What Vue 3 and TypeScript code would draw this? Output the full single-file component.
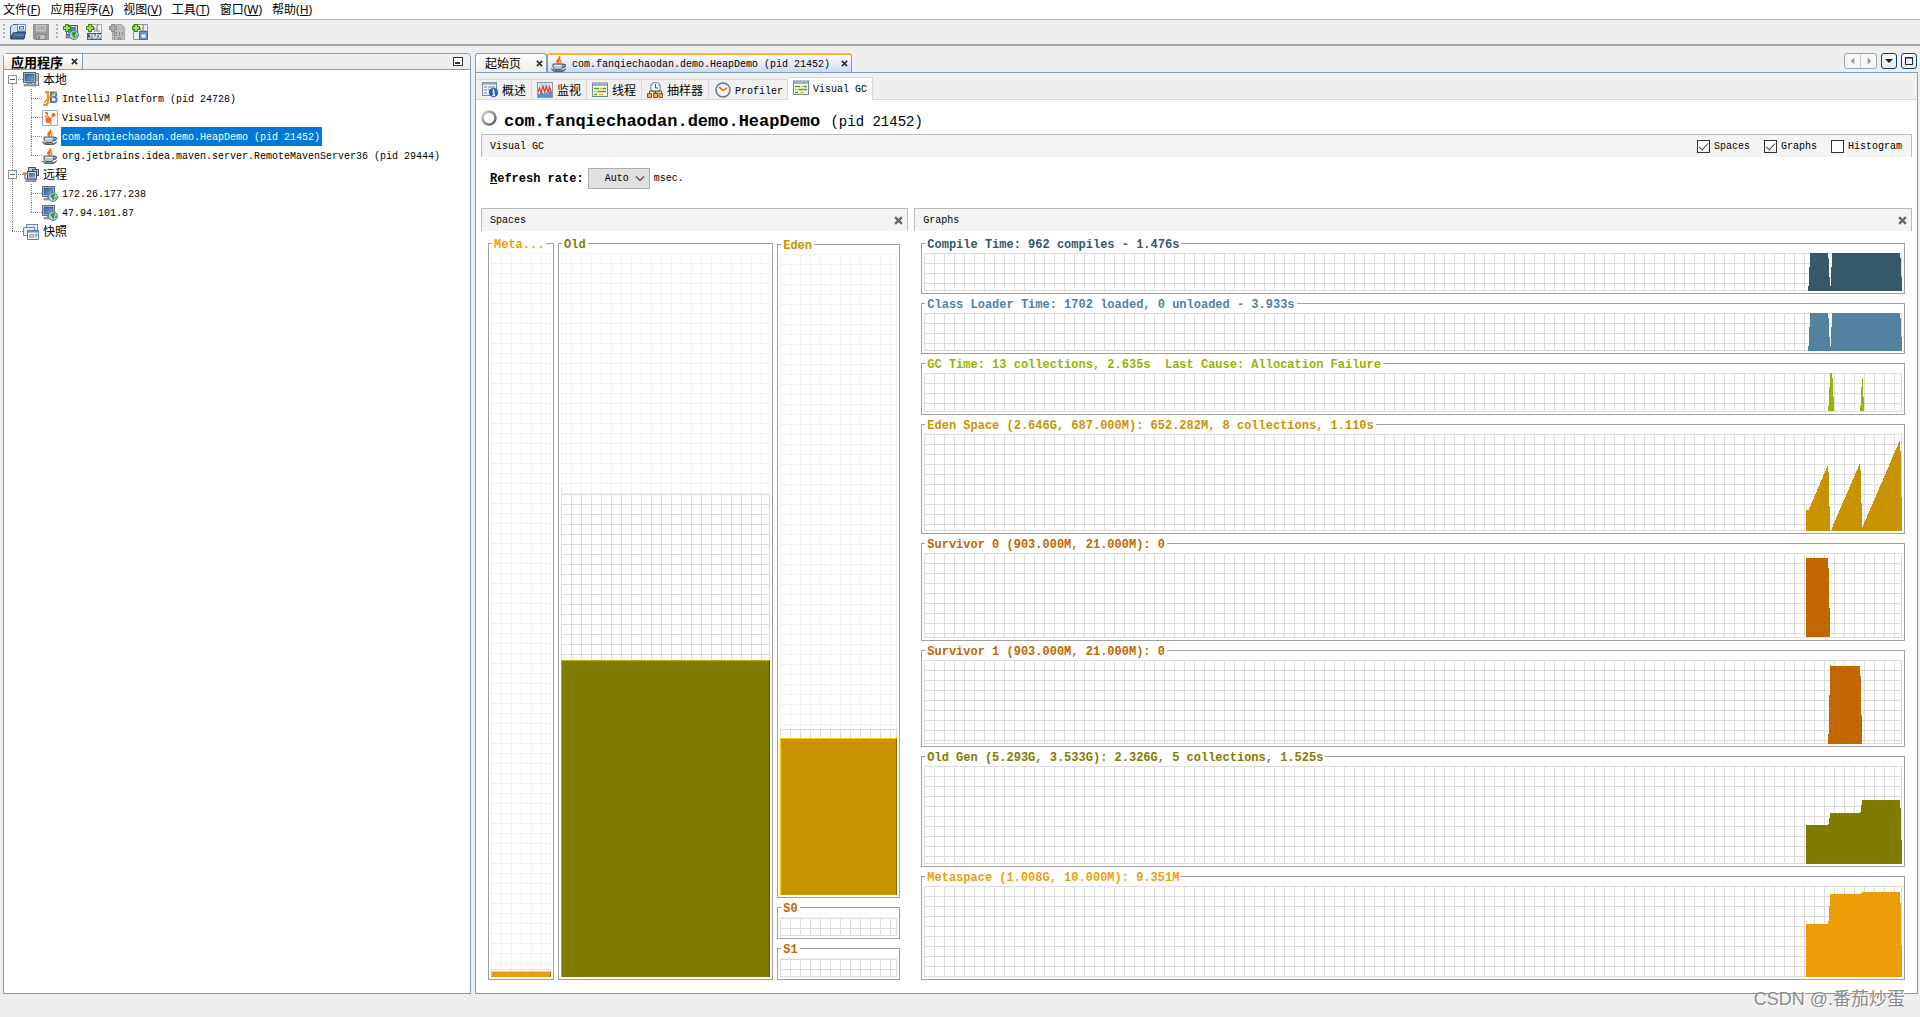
<script setup lang="ts">
import { ref } from 'vue'

interface TreeRow {
  label: string
  icon: string
  guides: string[]
  expander?: boolean
  selected?: boolean
}

interface Space {
  name: string
  color: string
  light: string
  dark: string
  used: number
  committed: number
}

interface Graph {
  title: string
  color: string
  weight: number
  height: number
  points: string
}

const menus = [
  { text: '文件', key: 'F' },
  { text: '应用程序', key: 'A' },
  { text: '视图', key: 'V' },
  { text: '工具', key: 'T' },
  { text: '窗口', key: 'W' },
  { text: '帮助', key: 'H' },
]

const toolGroups = [
  [
    { icon: 'open', label: 'Open' },
    { icon: 'save', label: 'Save' },
  ],
  [
    { icon: 'add-host', label: 'Add remote host' },
    { icon: 'add-jmx', label: 'Add JMX connection' },
    { icon: 'add-dump', label: 'Add core dump' },
    { icon: 'add-snap', label: 'Add snapshot' },
  ],
]

// Guide codes: d = down, u = up, r = right
const tree: TreeRow[] = [
  { label: '本地', icon: 'local', guides: ['dr'], expander: true },
  { label: 'IntelliJ Platform (pid 24728)', icon: 'jb', guides: ['ud', 'udr'] },
  { label: 'VisualVM', icon: 'vvm', guides: ['ud', 'udr'] },
  { label: 'com.fanqiechaodan.demo.HeapDemo (pid 21452)', icon: 'java', guides: ['ud', 'udr'], selected: true },
  { label: 'org.jetbrains.idea.maven.server.RemoteMavenServer36 (pid 29444)', icon: 'java', guides: ['ud', 'ur'] },
  { label: '远程', icon: 'remote', guides: ['udr'], expander: true },
  { label: '172.26.177.238', icon: 'host', guides: ['ud', 'udr'] },
  { label: '47.94.101.87', icon: 'host', guides: ['ud', 'ur'] },
  { label: '快照', icon: 'snaps', guides: ['ur'] },
]

const views = [
  { label: '概述', icon: 'overview' },
  { label: '监视', icon: 'monitor' },
  { label: '线程', icon: 'threads' },
  { label: '抽样器', icon: 'sampler' },
  { label: 'Profiler', icon: 'profiler' },
  { label: 'Visual GC', icon: 'threads' },
]
const activeView = ref('Visual GC')

const toggles = ref([
  { label: 'Spaces', on: true },
  { label: 'Graphs', on: true },
  { label: 'Histogram', on: false },
])
const rate = ref('Auto')

const meta: Space = { name: 'Meta...', color: '#ec9e0a', light: '#ffdc00', dark: '#a56e07', used: 0.8, committed: 1.1 }
const old: Space = { name: 'Old', color: '#807c00', light: '#b4b000', dark: '#595600', used: 43.9, committed: 66.8 }
const eden: Space = { name: 'Eden', color: '#c89200', light: '#ffcc00', dark: '#8c6600', used: 24.5, committed: 26 }
const s0: Space = { name: 'S0', color: '#c26600', light: '#ff9000', dark: '#884700', used: 0, committed: 100 }
const s1: Space = { ...s0, name: 'S1' }
const columns = [
  { weight: 66, spaces: [{ ...meta, grow: 1 }] },
  { weight: 215, spaces: [{ ...old, grow: 1 }] },
  { weight: 123, spaces: [{ ...eden, grow: 641 }, { ...s0, grow: 19 }, { ...s1, grow: 19 }] },
]

// Turns [column, top] samples into a stepped outline that ends at the baseline
function steps(height: number, samples: number[][]): string {
  let path = `${samples[0][0]},${height}`
  samples.forEach(([x, y], i) => {
    path += ` ${x},${y}`
    if (i + 1 < samples.length) path += ` ${samples[i + 1][0]},${y}`
  })
  return `${path} ${samples[samples.length - 1][0]},${height}`
}

function ramp(x0: number, y0: number, x1: number, y1: number): number[][] {
  const out: number[][] = []
  for (let x = x0; x < x1; x++) out.push([x, Math.round(y0 + ((y1 - y0) * (x - x0)) / (x1 - 1 - x0))])
  return out
}

const busy = [[4, 33], [5, 14], [6, 0], [24, 5], [25, 24], [26, 33], [27, 14], [28, 0], [96, 5], [97, 24], [98, 38]]
const graphs: Graph[] = [
  { title: 'Compile Time: 962 compiles - 1.476s', color: '#35586a', weight: 38, height: 38, points: steps(38, busy) },
  { title: 'Class Loader Time: 1702 loaded, 0 unloaded - 3.933s', color: '#5282a0', weight: 38, height: 38, points: steps(38, busy) },
  {
    title: 'GC Time: 13 collections, 2.635s  Last Cause: Allocation Failure', color: '#96b400', weight: 38, height: 38,
    points: steps(38, [[24, 33], [25, 14], [26, 0], [28, 5], [29, 24], [30, 38], [56, 33], [57, 14], [58, 5], [59, 24], [60, 38]]),
  },
  {
    title: 'Eden Space (2.646G, 687.000M): 652.282M, 8 collections, 1.110s', color: '#c89200', weight: 97, height: 97,
    points: steps(97, [[2, 76], ...ramp(5, 74, 24, 32), [24, 38], [25, 72], [26, 97], ...ramp(27, 95, 56, 30), [56, 36], [57, 69], ...ramp(58, 93, 96, 7), [96, 17], [97, 63], [98, 97]]),
  },
  { title: 'Survivor 0 (903.000M, 21.000M): 0', color: '#c26600', weight: 84, height: 84, points: steps(84, [[2, 5], [24, 15], [25, 55], [26, 84]]) },
  { title: 'Survivor 1 (903.000M, 21.000M): 0', color: '#c26600', weight: 84, height: 84, points: steps(84, [[24, 74], [25, 35], [26, 5], [27, 6], [56, 16], [57, 55], [58, 84]]) },
  {
    title: 'Old Gen (5.293G, 3.533G): 2.326G, 5 collections, 1.525s', color: '#807c00', weight: 97, height: 97,
    points: steps(97, [[2, 59], [24, 58], [25, 52], [26, 47], [56, 46], [57, 39], [58, 34], [96, 42], [97, 74], [98, 97]]),
  },
  {
    title: 'Metaspace (1.008G, 10.000M): 9.351M', color: '#ec9e0a', weight: 91, height: 91,
    points: steps(91, [[2, 38], [24, 35], [25, 20], [26, 8], [57, 7], [58, 6], [96, 17], [97, 59], [98, 91]]),
  },
]
</script>

<template>
  <div class="app">
    <svg class="defs" aria-hidden="true">
      <defs>
        <linearGradient id="gScreen" x1="0" y1="0" x2="1" y2="1">
          <stop offset="0" stop-color="#2f5f92" /><stop offset="1" stop-color="#7fa9d6" />
        </linearGradient>
        <linearGradient id="gSpin" x1="0" y1="0" x2="1" y2="1">
          <stop offset="0" stop-color="#d0d2d4" /><stop offset="0.5" stop-color="#8d9196" /><stop offset="1" stop-color="#54585c" />
        </linearGradient>
        <symbol id="plus" viewBox="0 0 16 16">
          <path d="M2.500.5h3v2h2v3h-2v2h-3v-2h-2v-3h2z" fill="#a4e04a" stroke="#2d7d10" />
        </symbol>
        <symbol id="open" viewBox="0 0 16 16">
          <path d="M.5 14.500V3L3 .5h5v8H3z" fill="#d5deea" stroke="#4b6585" />
          <rect x="7.500" y=".5" width="8" height="6.500" fill="#fff" stroke="#6b8cc0" />
          <rect x="9.500" y="2.500" width="4" height="2.500" fill="#dce8f8" stroke="#4a78bd" />
          <path d="M.8 15l2-5 3-.2L7.500 8h8L14 15z" fill="#40658e" stroke="#1e3c60" />
          <path d="M3.500 11h10" stroke="#7d9fc4" />
        </symbol>
        <symbol id="save" viewBox="0 0 16 16">
          <path d="M.5.5h15v15h-14l-1-1z" fill="#9a9a9a" stroke="#939393" />
          <rect x="3" y="1" width="10" height="6.500" fill="#c4c4c4" />
          <path d="M4 3h8M4 5h8" stroke="#989898" />
          <rect x="3.500" y="10.500" width="9" height="5" fill="#bdbdbd" stroke="#858585" />
          <rect x="5" y="12" width="2" height="3" fill="#808080" />
        </symbol>
        <symbol id="globe" viewBox="0 0 16 16">
          <circle cx="11" cy="11" r="4.500" fill="#b4d4ee" stroke="#4f7ba6" />
          <path d="M9 8.500l3-1 1.500 1.500-1.500 2 .5 2-1.500 1.500-1-2.500-1.500-1z" fill="#39a01e" />
          <path d="M13 11.500l1.500-1v2l-1 1z" fill="#39a01e" />
        </symbol>
        <symbol id="host" viewBox="0 0 16 16">
          <rect x=".5" y=".5" width="12" height="10" fill="#d3d7dc" stroke="#5f6d7e" />
          <rect x="2" y="2" width="9" height="7" fill="url(#gScreen)" stroke="#274d78" stroke-width=".6" />
          <path d="M5 11h3v1.500h2V14H2v-1.500h3z" fill="#9aa2ab" stroke="#636c77" stroke-width=".5" />
          <use href="#globe" />
        </symbol>
        <symbol id="add-host" viewBox="0 0 16 16">
          <rect x="3.500" y="1.500" width="11" height="9" fill="#d3d7dc" stroke="#4f5c6b" />
          <rect x="5" y="3" width="8" height="6" fill="url(#gScreen)" />
          <path d="M4 11h6v3H3v-2z" fill="#8d959f" stroke="#535d68" stroke-width=".6" />
          <use href="#globe" />
          <use href="#plus" />
        </symbol>
        <symbol id="cup-mini" viewBox="0 0 16 16">
          <path d="M12 1c-3 2 1 3-1.500 5.500" fill="none" stroke="#e87722" stroke-width="1.400" />
          <path d="M8 7h6M9 4l-1 2" stroke="#6d8aa8" stroke-width="1.200" />
        </symbol>
        <symbol id="add-jmx" viewBox="0 0 16 16">
          <rect x="3.500" y=".5" width="12" height="14" fill="#eef2f7" stroke="#9fb0c4" />
          <use href="#cup-mini" />
          <rect x="1" y="9" width="15" height="7" fill="#5a5a5a" />
          <text x="2" y="15" font-size="7" font-weight="700" fill="#fff" font-family="Liberation Sans, sans-serif">JMX</text>
          <use href="#plus" />
        </symbol>
        <symbol id="add-dump" viewBox="0 0 16 16">
          <path d="M3.500.5h9l3 3v12h-12z" fill="#bcbcbc" stroke="#a6a6a6" />
          <path d="M5 8.500h2.500v3H5zM10.500 8v4M5.500 13v2.500M9 13.500h2.500v2H9zM13.500 8v3" fill="none" stroke="#8d8d8d" />
          <path d="M2.500.5h3v2h2v3h-2v2h-3v-2h-2v-3h2z" fill="#aaa" stroke="#8a8a8a" />
        </symbol>
        <symbol id="add-snap" viewBox="0 0 16 16">
          <path d="M1.500.5h14v15h-14z" fill="#e8eef8" stroke="#8097b8" />
          <use href="#cup-mini" />
          <rect x="7.500" y="7.500" width="8" height="8" fill="#6b92cb" stroke="#4469a6" />
          <rect x="9.500" y="10.500" width="4" height="3" fill="#fff" />
          <use href="#plus" />
        </symbol>
        <symbol id="local" viewBox="0 0 16 16">
          <path d="M11.500 1.500h4v12h-4z" fill="#d9d9d6" stroke="#73777b" />
          <path d="M12 4h3M12 6h3M12 8h3" stroke="#8a8e92" />
          <rect x=".5" y=".5" width="12" height="10" fill="#cfd3d8" stroke="#596675" />
          <rect x="2" y="2" width="9" height="7" fill="url(#gScreen)" stroke="#264b76" stroke-width=".6" />
          <path d="M4 11h5v1.500h4V14H1v-1.500h3z" fill="#a6acb3" stroke="#697079" stroke-width=".6" />
        </symbol>
        <symbol id="remote" viewBox="0 0 16 16">
          <rect x="5.500" y=".5" width="7" height="6" fill="#b9c3cf" stroke="#46525f" />
          <rect x="9.500" y="2.500" width="6" height="6" fill="#b9c3cf" stroke="#46525f" />
          <rect x="4.500" y="4.500" width="9" height="7.500" fill="#d7dbdf" stroke="#38434f" />
          <rect x="6" y="6" width="6" height="4.500" fill="url(#gScreen)" />
          <path d="M5 12.500h8v2H3v-1z" fill="#a1a7ae" stroke="#4e5761" stroke-width=".6" />
          <path d="M2 6.500h3M2 6v6h3" stroke="#57626e" fill="none" />
          <circle cx="1.500" cy="6.500" r="1.300" fill="#f0a830" stroke="#8b5a10" stroke-width=".6" />
        </symbol>
        <symbol id="snaps" viewBox="0 0 16 16">
          <path d="M3.500.5h11v8h-11z" fill="#e2e9f4" stroke="#6c86b5" />
          <path d="M.5 3.500h11v8H.5z" fill="#e9eef6" stroke="#6c86b5" />
          <path d="M4.500 6.500h11v9h-11z" fill="#f4f7fb" stroke="#5876a8" />
          <path d="M5 7.500h10" stroke="#6c8fd0" stroke-width="2" />
          <path d="M6.500 10.500h4v3h-4zM12 10h2v2h-2zM11.500 13.500h2" fill="#c8ccd2" stroke="#888f9a" stroke-width=".7" />
        </symbol>
        <symbol id="jb" viewBox="0 0 16 16">
          <path d="M9 1.500h3.500c2.500 0 2.500 4-.5 4.500 3.500 0 3.500 5 0 5H9z" fill="none" stroke="#4876c8" stroke-width="2" />
          <path d="M9 6h3.500" stroke="#4876c8" stroke-width="1.600" />
          <path d="M3 1h3v9.500c0 3-2 4-4.500 3.500" fill="none" stroke="#f2920c" stroke-width="2.400" />
          <path d="M14.500.5L2 11.500" stroke="#f2920c" stroke-width="1.500" />
        </symbol>
        <symbol id="vvm" viewBox="0 0 16 16">
          <rect x=".5" y=".5" width="15" height="15" fill="#f7f9fb" stroke="#9bb2c8" />
          <path d="M7 10L5 2.500M7 10l5-5" stroke="#f26a21" />
          <circle cx="6.500" cy="10" r="3" fill="#f26a21" /><circle cx="11.500" cy="5" r="2" fill="#f26a21" />
          <circle cx="4.500" cy="3" r="1.300" fill="#f26a21" /><circle cx="4" cy="6.500" r="1" fill="#f26a21" />
          <circle cx="9" cy="13.500" r="1" fill="#f26a21" />
        </symbol>
        <symbol id="java" viewBox="0 0 16 16">
          <path d="M8.500 0C9 2.500 4 4 6 6.500 7 8 8 8 8 8 6 5.500 10.500 4.500 8.500 0z" fill="#e8660c" stroke="#e8660c" stroke-width=".8" />
          <path d="M10.500 3.500c-2.500 1.500-1 3-1.500 4.500 2-1.500.5-2.500 1.500-4.500z" fill="#f08a30" stroke="#f08a30" stroke-width=".5" />
          <path d="M2 8h10v2c0 2-1.500 3.500-3 3.500H5c-2 0-3-1.500-3-3.500z" fill="#bac6cf" stroke="#4a5a67" />
          <path d="M12 8.500c3.500-.8 3 3-.8 3.200" fill="none" stroke="#4a5a67" stroke-width="1.300" />
          <path d="M3.500 9.500h6.500" stroke="#eef3f6" />
          <path d="M.5 12.800c2 2.800 12 2.800 14 0-1 2-2 2.700-4 2.700h-6c-2 0-3-.7-4-2.700z" fill="#a9b5be" stroke="#4a5a67" />
        </symbol>
        <symbol id="overview" viewBox="0 0 16 16">
          <rect x=".5" y=".5" width="14" height="13" fill="#eaf0f7" stroke="#7d8fa3" />
          <path d="M1 1.500h13" stroke="#8ea7c3" stroke-width="2" />
          <path d="M2 5h3M6 5h7M2 8h3M6 8h3M2 11h3" stroke="#6f86a3" />
          <circle cx="11.500" cy="10.500" r="4.300" fill="#2b5eb0" stroke="#1c4384" stroke-width=".6" />
          <path d="M11.500 7.300v1.600M10.500 10h1.500v3.300M10.300 13.300h2.900" stroke="#fff" stroke-width="1.300" fill="none" />
        </symbol>
        <symbol id="monitor" viewBox="0 0 16 16">
          <rect x=".5" y=".5" width="15" height="15" fill="#e6ebf1" stroke="#8b98a8" />
          <path d="M4 1v9M8 1v9M12 1v9" stroke="#b6c2d0" />
          <path d="M1 15v-4l2 1 2-2 2 2 2-2 2 2 2-3 2 2v4z" fill="#5c8fd0" />
          <path d="M1 10l1.500-4 1.500 5 2-7 1.500 6 2-6 1.500 7 1.500-6 2 6" fill="none" stroke="#d83838" stroke-width="1.100" />
        </symbol>
        <symbol id="threads" viewBox="0 0 16 16">
          <rect x=".5" y="1" width="15" height="13.500" fill="#fbfcfd" stroke="#75879b" />
          <path d="M1 2.500h14" stroke="#9db1c8" stroke-width="3" />
          <path d="M2 6.500h5M11 6.500h3M6 9.500h8M2 12.500h3" stroke="#35a811" stroke-width="1.400" />
          <path d="M8 6.500h3M2 9.500h4M7 12.500h4" stroke="#f0b400" stroke-width="1.400" />
        </symbol>
        <symbol id="sampler" viewBox="0 0 16 16">
          <circle cx="8.500" cy="5.500" r="5" fill="#f2f5f8" stroke="#8094ab" stroke-width="1.200" />
          <path d="M8.500 2v4h2.500" stroke="#3a5679" fill="none" />
          <path d="M2.500 12V9h12v3M8.500 9v3" stroke="#735018" fill="none" />
          <path d="M.5 11.500h4v4h-4zM6.500 11.500h4v4h-4zM12 11.500h3.500v4H12z" fill="#f4b73a" stroke="#835508" />
        </symbol>
        <symbol id="profiler" viewBox="0 0 16 16">
          <circle cx="8" cy="8" r="7" fill="#f4f8fb" stroke="#66788d" stroke-width="1.500" />
          <circle cx="8" cy="8" r="5.300" fill="none" stroke="#afc3d8" stroke-dasharray="1 2" />
          <path d="M8 8.500L4 5M8 8.500L12 6" stroke="#e77718" stroke-width="1.700" />
        </symbol>
        <symbol id="cross" viewBox="0 0 8 8">
          <path d="M1 1l6 6M7 1L1 7" stroke="currentColor" stroke-width="2" fill="none" />
        </symbol>
      </defs>
    </svg>

    <nav class="menubar">
      <button v-for="m in menus" :key="m.key" type="button">{{ m.text }}(<u>{{ m.key }}</u>)</button>
    </nav>

    <div class="toolbar" role="toolbar">
      <div v-for="(group, i) in toolGroups" :key="i" class="tool-group">
        <span class="grip"></span>
        <button v-for="t in group" :key="t.icon" type="button" :aria-label="t.label">
          <svg class="icon"><use :href="'#' + t.icon" /></svg>
        </button>
      </div>
    </div>

    <div class="workspace">
      <aside class="explorer">
        <header class="explorer-head">
          <div class="explorer-tab">
            <span>应用程序</span>
            <button type="button" aria-label="Close"><svg class="x"><use href="#cross" /></svg></button>
          </div>
          <button type="button" class="minimize" aria-label="Minimize"></button>
        </header>
        <ul class="tree">
          <li v-for="row in tree" :key="row.label">
            <svg v-for="(g, i) in row.guides" :key="i" class="guide" viewBox="0 0 19 19">
              <path v-if="g.includes('u')" d="M8.500 0v10" />
              <path v-if="g.includes('d')" d="M8.500 10v9" />
              <path v-if="g.includes('r')" d="M8 9.500h11" />
              <g v-if="row.expander" class="expander">
                <rect x="4.500" y="5.500" width="8" height="8" rx="1" />
                <path d="M6 9.500h5" />
              </g>
            </svg>
            <svg class="icon"><use :href="'#' + row.icon" /></svg>
            <span class="node" :class="{ selected: row.selected, root: row.guides.length === 1 }">{{ row.label }}</span>
          </li>
        </ul>
      </aside>

      <main class="editor">
        <header class="doc-tabs">
          <div class="doc-tab">
            <span class="cjk">起始页</span>
            <button type="button" aria-label="Close"><svg class="x"><use href="#cross" /></svg></button>
          </div>
          <div class="doc-tab current">
            <svg class="icon"><use href="#java" /></svg>
            <span class="low">com.fanqiechaodan.demo.HeapDemo (pid 21452)</span>
            <button type="button" aria-label="Close"><svg class="x"><use href="#cross" /></svg></button>
          </div>
          <div class="doc-controls">
            <span class="pair">
              <button type="button" aria-label="Scroll left"><svg viewBox="0 0 16 16"><path d="M10 4v8L6 8z" fill="#999" /></svg></button>
              <button type="button" aria-label="Scroll right"><svg viewBox="0 0 16 16"><path d="M7 4v8l4-4z" fill="#999" /></svg></button>
            </span>
            <button type="button" class="ctl" aria-label="Show list"><svg viewBox="0 0 14 14"><path d="M3 5h8L7 9z" fill="#222" /></svg></button>
            <button type="button" class="ctl" aria-label="Maximize"><svg viewBox="0 0 14 14"><path d="M3.500 3.500h7v7h-7z" fill="none" stroke="#222" /><path d="M3 4h8" stroke="#222" /></svg></button>
          </div>
        </header>

        <div class="view-tabs" role="tablist">
          <button
            v-for="v in views" :key="v.label" type="button" role="tab"
            :class="{ active: v.label === activeView }" :aria-selected="v.label === activeView"
            @click="activeView = v.label"
          >
            <svg class="icon"><use :href="'#' + v.icon" /></svg><span>{{ v.label }}</span>
          </button>
        </div>

        <div class="page">
          <h1>
            <svg class="icon" viewBox="0 0 16 16"><circle cx="8" cy="8" r="6.500" fill="none" stroke="url(#gSpin)" stroke-width="2.500" /></svg>
            <span>com.fanqiechaodan.demo.HeapDemo <small>(pid 21452)</small></span>
          </h1>

          <div class="bar">
            <h2>Visual GC</h2>
            <div class="toggles">
              <label v-for="t in toggles" :key="t.label"><input v-model="t.on" type="checkbox" /><span class="low">{{ t.label }}</span></label>
            </div>
          </div>

          <div class="refresh">
            <label for="rate"><u>R</u>efresh rate:</label>
            <span class="combo">
              <select id="rate" v-model="rate">
                <option>Auto</option>
              </select>
              <svg viewBox="0 0 10 6"><path d="M1 .5l4 4 4-4" fill="none" stroke="#444" stroke-width="1.200" /></svg>
            </span>
            <span class="low">msec.</span>
          </div>

          <div class="panels">
            <section class="spaces">
              <div class="bar">
                <h2>Spaces</h2>
                <button type="button" aria-label="Close Spaces"><svg class="x big"><use href="#cross" /></svg></button>
              </div>
              <div class="space-row">
                <div v-for="(c, i) in columns" :key="i" class="space-col" :class="{ multi: c.spaces.length > 1 }" :style="{ flexGrow: c.weight }">
                  <div v-for="s in c.spaces" :key="s.name" class="box" :style="{ flexGrow: s.grow }">
                    <h3 :style="{ color: s.color }">{{ s.name }}</h3>
                    <div class="grid faint">
                      <div class="grid committed" :style="{ height: s.committed + '%' }"></div>
                      <div
                        v-if="s.used" class="used"
                        :style="{ height: s.used + '%', background: s.color, borderColor: `${s.light} ${s.dark} ${s.color} ${s.light}` }"
                      ></div>
                    </div>
                  </div>
                </div>
              </div>
            </section>

            <section class="graphs">
              <div class="bar">
                <h2>Graphs</h2>
                <button type="button" aria-label="Close Graphs"><svg class="x big"><use href="#cross" /></svg></button>
              </div>
              <div class="graph-col">
                <div v-for="g in graphs" :key="g.title" class="box" :style="{ flexGrow: g.weight }">
                  <h3 :style="{ color: g.color }">{{ g.title }}</h3>
                  <div class="grid">
                    <svg class="plot" :viewBox="`0 0 98 ${g.height}`" preserveAspectRatio="none">
                      <polygon :points="g.points" :fill="g.color" />
                    </svg>
                  </div>
                </div>
              </div>
            </section>
          </div>
        </div>
      </main>
    </div>
    <div class="watermark">CSDN @.番茄炒蛋</div>
  </div>
</template>

<style>
body {
  background: #efefef;
}
</style>

<style scoped>
.app {
  position: relative;
  display: flex;
  flex-direction: column;
  height: 100vh;
  min-height: 700px;
  box-sizing: border-box;
  padding-bottom: 23px;
  background: #efefef;
  color: #000;
  font: 10px/12px 'Liberation Mono', 'Noto Sans CJK SC', monospace;
}
.app *, .app *::before, .app *::after { box-sizing: border-box; }
button {
  display: flex;
  align-items: center;
  margin: 0;
  padding: 0;
  border: 0;
  background: none;
  color: inherit;
  font: inherit;
}
h1, h2, h3, ul { margin: 0; padding: 0; font-size: inherit; font-weight: 400; }
h2, .low { padding-top: 2px; }
svg { display: block; flex: none; }
.defs { position: absolute; width: 0; height: 0; }
.icon { width: 16px; height: 16px; }
.x { width: 7px; height: 7px; color: #333; }
.x.big { width: 9px; height: 9px; color: #666; }

.menubar {
  display: flex;
  gap: 10px;
  height: 20px;
  flex: none;
  padding: 2px 3px 1px;
  border-bottom: 1px solid #b8b8b8;
  background: #fff;
  font: 12px/16px 'Noto Sans', 'Noto Sans CJK SC', sans-serif;
}
.menubar button { white-space: nowrap; display: block; }
.toolbar {
  display: flex;
  flex: none;
  gap: 7px;
  height: 26px;
  padding: 4px 3px 0;
  border-bottom: 2px solid #a6a6a6;
}
.tool-group { display: flex; gap: 7px; height: 16px; }
.tool-group .grip {
  width: 2px;
  margin-right: -2px;
  background: repeating-linear-gradient(#b0b0b0 0 2px, transparent 2px 4px);
}

.workspace { display: flex; flex: 1; gap: 4px; min-height: 0; padding: 7px 2px 0 3px; }
.explorer, .editor { display: flex; flex-direction: column; min-width: 0; }
.explorer {
  flex: 466 1 0;
  border: 1px solid #809db9;
  border-radius: 4px 4px 0 0;
  background: #fff;
}
.explorer-head {
  display: flex;
  justify-content: space-between;
  height: 16px;
  flex: none;
  border-bottom: 1px solid #809db9;
  border-radius: 4px 4px 0 0;
  background: #efefef;
}
.explorer-tab {
  display: flex;
  gap: 8px;
  height: 15px;
  padding: 0 4px 0 7px;
  border-right: 1px solid #809db9;
  background: linear-gradient(#fff, #eeebe0);
  font: 700 13px/16px 'Noto Sans CJK SC', sans-serif;
}
.explorer-tab button { height: 14px; }
.minimize { width: 10px; height: 9px; margin: 3px 7px 0 0; border: 1px solid #333; background: #fff; }
.minimize::after { content: ''; width: 5px; height: 2px; margin: 3px 0 0 1px; background: #333; }

.tree { list-style: none; }
.tree li { display: flex; align-items: center; height: 19px; white-space: nowrap; }
.tree .icon { margin-top: 1px; }
.guide { width: 19px; height: 19px; fill: none; stroke: #808080; stroke-dasharray: 1 1; shape-rendering: crispEdges; }
.expander { stroke-dasharray: none; }
.expander rect { fill: #fff; stroke: #919191; }
.expander path { stroke: #3c5f9c; }
.node { height: 19px; margin-left: 3px; padding: 0 2px 0 1px; line-height: 21px; }
.node.root { font-size: 12px; line-height: 23px; }
.node.selected { background: #0078d7; color: #fff; }

.editor { flex: 1443 1 0; }
.doc-tabs { display: flex; flex: none; height: 20px; border-bottom: 1px solid #809db9; }
.doc-tab {
  display: flex;
  align-items: center;
  gap: 6px;
  padding: 0 3px;
  border: 1px solid #809db9;
  border-bottom: 0;
  border-radius: 3px 3px 0 0;
  background: linear-gradient(#fff, #efede4);
  white-space: nowrap;
}
.doc-tab .cjk { padding: 4px 9px 0 6px; font-size: 12px; line-height: 14px; }
.doc-tab.current {
  gap: 5px;
  border-top: 2px solid #ffb52b;
  background: linear-gradient(#fff, #ccd8f4);
}
.doc-tab.current button { margin-left: 6px; }
.doc-controls { display: flex; gap: 4px; height: 16px; margin-left: auto; margin-right: 1px; }
.pair { display: flex; border: 1px solid #8fa9c4; border-radius: 3px; background: #f6f6f4; }
.pair button + button { border-left: 1px solid #c6cdd4; }
.pair svg { width: 15px; height: 14px; }
.ctl { border: 1px solid #0e3f76; border-radius: 3px; background: linear-gradient(#fff, #ece9df); }
.ctl svg { width: 14px; height: 14px; }

.view-tabs {
  display: flex;
  align-items: flex-end;
  flex: none;
  height: 27px;
  padding-left: 1px;
  border-right: 1px solid #809db9;
  border-left: 1px solid #809db9;
  background: linear-gradient(#d9d9d9, #d9d9d9) 0 100% / 100% 1px no-repeat;
}
.view-tabs button {
  gap: 4px;
  height: 21px;
  padding: 0 5px;
  border: 1px solid #d9d9d9;
  border-left: 0;
  background: #f0f0f0;
  font-size: 12px;
  white-space: nowrap;
}
.view-tabs span { padding-top: 4px; }
.view-tabs button:nth-child(n + 5) { font-size: 10px; padding: 0 4px 0 6px; }
.view-tabs button.active { height: 23px; padding: 0 5px 2px; border-bottom: 0; background: #fff; }

.page {
  display: flex;
  flex-direction: column;
  flex: 1;
  min-height: 0;
  padding: 0 5px 13px;
  border: 1px solid #809db9;
  border-top: 0;
  background: #fff;
}
h1 { display: flex; gap: 7px; height: 34px; flex: none; padding-top: 10px; font-size: 17px; font-weight: 700; line-height: 24px; white-space: nowrap; }
h1 small { font-size: 14px; font-weight: 400; }
h1 > span { height: 24px; }
.bar {
  display: flex;
  align-items: center;
  justify-content: space-between;
  flex: none;
  height: 23px;
  padding: 0 4px 0 8px;
  border: 1px solid #bcbcbc;
  border-bottom: 0;
  background: #f4f4f4;
}
.toggles { display: flex; gap: 14px; padding-right: 5px; }
.toggles label { display: flex; align-items: center; gap: 4px; }
.toggles input {
  appearance: none;
  width: 13px;
  height: 13px;
  margin: 0;
  border: 1px solid #333;
  background: #fff;
}
.toggles input:checked::after {
  content: '';
  display: block;
  width: 5px;
  height: 9px;
  margin-left: 3px;
  border: solid #444;
  border-width: 0 1px 1px 0;
  transform: rotate(42deg);
}
.refresh { display: flex; align-items: center; gap: 4px; flex: none; height: 51px; padding: 0 9px 9px; }
.refresh label { padding-top: 2px; font-size: 12px; font-weight: 700; line-height: 16px; }
.combo { position: relative; }
.combo select {
  appearance: none;
  display: block;
  width: 62px;
  height: 21px;
  padding: 1px 0 0 16px;
  border: 1px solid #adadad;
  border-radius: 0;
  background: #e1e1e1;
  color: #000;
  font: inherit;
}
.combo svg { position: absolute; top: 8px; right: 5px; width: 10px; height: 6px; pointer-events: none; }

.panels { display: flex; flex: 1; gap: 6px; min-height: 0; }
.spaces, .graphs { display: flex; flex-direction: column; min-width: 0; }
.spaces { flex: 427 1 0; }
.graphs { flex: 997 1 0; }
.space-row { display: flex; flex: 1; gap: 4px; min-height: 0; padding: 12px 8px 0 7px; }
.space-col, .graph-col { display: flex; flex-direction: column; flex: 1 1 0; gap: 9px; min-height: 0; }
.space-col.multi { padding-top: 1px; }
.graph-col { padding: 12px 7px 0; }
.box { position: relative; display: flex; flex: 1 1 0; min-height: 0; padding: 9px 2px 2px; border: 1px solid #a0a0a0; }
.box h3 {
  position: absolute;
  top: -7px;
  left: 3px;
  padding: 1px 2px 0;
  background: #fff;
  font-size: 12px;
  font-weight: 700;
  line-height: 14px;
  white-space: pre;
}
.grid {
  --line: #dcdcdc;
  position: relative;
  flex: 1;
  border-right: 1px solid var(--line);
  border-bottom: 1px solid var(--line);
  background:
    linear-gradient(90deg, var(--line) 1px, transparent 1px) 0 0 / 10px 10px,
    linear-gradient(var(--line) 1px, transparent 1px) 0 0 / 10px 10px;
}
.grid.faint { --line: #f1f1f1; }
.grid .committed {
  position: absolute;
  right: -1px;
  bottom: -1px;
  left: 0;
  background-color: #fff;
}
.used { position: absolute; right: -1px; bottom: -1px; left: 0; border: 1px solid; border-bottom: 0; }
.plot { position: absolute; top: 0; right: -1px; width: 98px; height: calc(100% + 1px); shape-rendering: crispEdges; }

.watermark {
  position: absolute;
  right: 15px;
  bottom: 5px;
  color: #8c8c8c;
  font: 18px/26px 'Liberation Sans', 'Noto Sans CJK SC', sans-serif;
  text-shadow: 1px 1px 0 #fff;
}
</style>
